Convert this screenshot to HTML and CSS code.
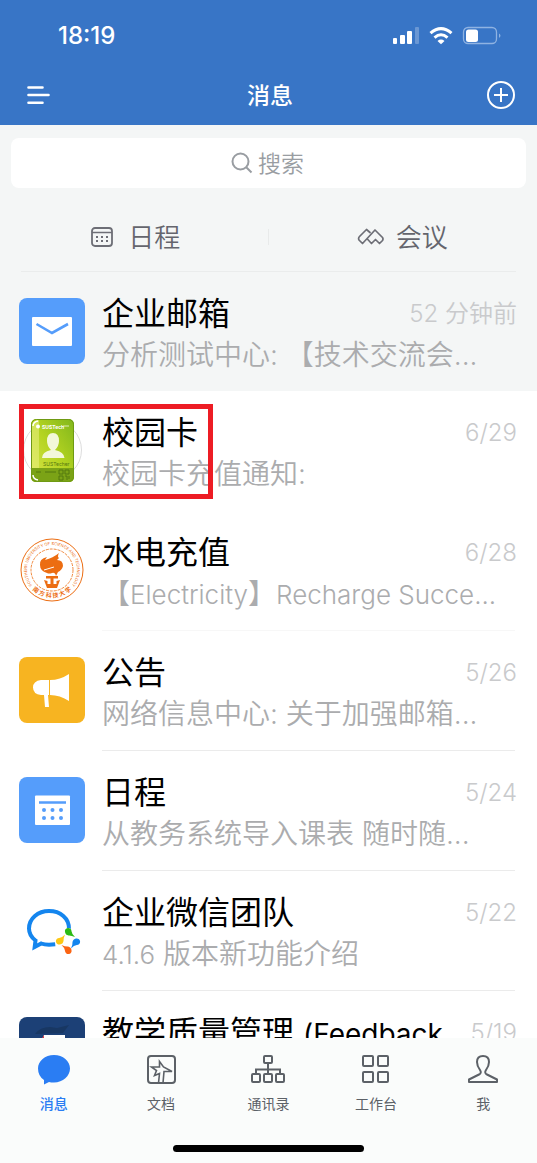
FILE: index.html
```html
<!DOCTYPE html>
<html lang="zh-CN">
<head>
<meta charset="utf-8">
<meta name="viewport" content="width=device-width, initial-scale=1">
<title>消息</title>
<link rel="stylesheet" href="styles.css">
</head>
<body>
<header class="header">
  <div class="status">
    <span class="clock">18:19</span>
    <svg class="status-icons" width="110" height="20" viewBox="0 0 110 20" aria-hidden="true">
      <g fill="#fff">
        <rect x="1" y="12" width="4" height="6" rx="1"/>
        <rect x="8" y="9" width="5" height="9" rx="1"/>
        <rect x="15" y="5" width="5" height="13" rx="1"/>
        <rect x="23" y="1" width="4" height="17" rx="1" opacity=".25"/>
        <path d="M49 18.200l-3.500-3.300q3.500-2.700 7 0z"/>
      </g>
      <g fill="none" stroke="#fff" stroke-width="3">
        <path d="M38.500 7.200q10.500-9.200 21 0"/>
        <path d="M42.500 11.600q6.500-5.600 13 0"/>
      </g>
      <rect x="71.500" y="1.500" width="33" height="16" rx="4.500" fill="none" stroke="#8fb3e2" stroke-width="1.300"/>
      <path d="M107 7.500q3 2 0 4.500z" fill="#8fb3e2"/>
      <rect x="74" y="3.500" width="12" height="12.500" rx="2.500" fill="#fff"/>
    </svg>
  </div>
  <div class="navbar">
    <button class="icon-button" aria-label="菜单">
      <svg width="24" height="20" viewBox="0 0 24 20"><path d="M2.500 2.500h14M2.500 10h20M2.500 17.700h14" stroke="#fff" stroke-width="2.600" stroke-linecap="round"/></svg>
    </button>
    <h1 class="page-title">消息</h1>
    <button class="icon-button" aria-label="添加">
      <svg width="30" height="30" viewBox="0 0 30 30" fill="none" stroke="#fff" stroke-width="2"><circle cx="15" cy="15" r="13"/><path d="M15 8v14M8 15h14"/></svg>
    </button>
  </div>
</header>

<section class="tools">
  <label class="search">
    <svg width="22" height="22" viewBox="0 0 22 22" fill="none" stroke="#999da2" stroke-width="2"><circle cx="9.500" cy="9.500" r="8"/><path d="M15 15l5.500 5.500"/></svg>
    <input class="search-input" type="text" placeholder="搜索" aria-label="搜索">
  </label>
  <div class="shortcuts">
    <button class="shortcut shortcut-calendar">
      <svg width="22" height="22" viewBox="0 0 22 22"><rect x="1" y="2" width="20" height="18" rx="3" fill="none" stroke="#6d6e76" stroke-width="1.800"/><path d="M1 6.500h20" stroke="#6d6e76" stroke-width="1.500"/><g fill="#6d6e76"><path d="M5 10h2v2H5zM10 10h2v2h-2zM15 10h2v2h-2zM5 14h2v2H5zM10 14h2v2h-2zM15 14h2v2h-2z"/></g></svg>
      <span>日程</span>
    </button>
    <button class="shortcut">
      <svg width="28" height="20" viewBox="0 0 28 20" fill="none" stroke="#6d6e76" stroke-width="1.700" stroke-linejoin="round" stroke-linecap="round"><path d="M13 5.500L9.500 2.500 2.500 9.500Q1 11 2 13L5.500 16.500 18 3 25.500 10.500Q26.500 12 25.500 13.500L22.500 16.500 18.500 12.500 14.500 16.500 10.800 12.500"/></svg>
      <span>会议</span>
    </button>
  </div>
</section>

<main class="list">
  <a class="row row-pinned" href="#mail">
    <svg class="avatar" viewBox="0 0 66 66"><rect width="66" height="66" rx="8" fill="#559dfb"/><rect x="13" y="19" width="40" height="29" rx="1" fill="#fff"/><path d="M17.500 26L33 35 49 26" fill="none" stroke="#559dfb" stroke-width="2.600"/></svg>
    <div class="body"><div class="line"><h2 class="name">企业邮箱</h2><time class="time">52 分钟前</time></div><p class="preview">分析测试中心: 【技术交流会...</p></div>
  </a>
  <a class="row row-marked" href="#card">
    <svg class="avatar" viewBox="0 0 66 66">
      <defs><linearGradient id="card" x1="0" y1="1" x2="1" y2="0"><stop offset="0" stop-color="#d9e64b"/><stop offset=".5" stop-color="#b5d421"/><stop offset="1" stop-color="#80b61c"/></linearGradient></defs>
      <circle cx="33.500" cy="33" r="29" fill="#fff" stroke="#ddd"/>
      <rect x="12" y="2" width="43" height="63" rx="5" fill="url(#card)"/>
      <path d="M12 51h43v9q0 5-5 5H17q-5 0-5-5z" fill="#7ba316"/>
      <path d="M15 4l5-1v48h-7V8z" fill="#edf28a" opacity=".5"/>
      <rect x="12.500" y="2.500" width="42" height="62" rx="5" fill="none" stroke="#6f9a13"/>
      <path d="M14 9q0-4 5-5M14 58q0 4 5 5" fill="none" stroke="#fff" stroke-width="1.500"/>
      <circle cx="19" cy="9.500" r="2" fill="#fff"/>
      <path d="M23 41q0-6 9-8-4-4-4-9 0-8 6-8t6 8q0 5-4 9 9 2 9.500 8z" fill="#f3f8d9"/>
      <text x="23" y="12" class="card-brand">SUSTech</text><path d="M44 9h6" stroke="#fff" opacity=".7"/>
      <text x="24" y="49" class="card-role">SUSTecher</text>
      <path d="M17 55h5M26 55h11" stroke="#55780f"/>
      <path d="M40 53h4v4h-4zM46 53h4v4h-4zM40 59h4v4h-4zM46 59h2v4M50 59v3" fill="none" stroke="#55780f"/>
    </svg>
    <div class="body"><div class="line"><h2 class="name">校园卡</h2><time class="time">6/29</time></div><p class="preview">校园卡充值通知:</p></div>
  </a>
  <a class="row row-faint" href="#utilities">
    <svg class="avatar" viewBox="0 0 66 66">
      <defs><path id="arc-top" d="M13 48A25 25 0 1 1 53 48"/><path id="arc-bottom" d="M6 40A28 28 0 0 0 60 40"/></defs>
      <g fill="none" stroke="#ec6d12"><circle cx="33" cy="33" r="31"/><circle cx="33" cy="33" r="21" stroke-width=".8" stroke-dasharray="3 1"/></g>
      <text class="seal-latin"><textPath href="#arc-top" startOffset="50%" text-anchor="middle">SOUTHERN UNIVERSITY OF SCIENCE AND TECHNOLOGY</textPath></text>
      <text class="seal-han"><textPath href="#arc-bottom" startOffset="50%" text-anchor="middle">南 方 科 技 大 学</textPath></text>
      <g fill="#ec6d12"><path d="M28 36q-7-2-7-8-1-6 7-8l-2 3q8-2 14-7-2 4 0 5l-2 2q6 0 6 6-1 4-5 6l-2 4q-1-4-4-3t-5 0z"/><path d="M27 39h12v2.500h-4.500V47h3v-3l3.500-1-3 8H28l-3-8 3.500 1v3h3v-5.500H27z"/></g>
      <path d="M25 33l10-3" stroke="#fff"/>
    </svg>
    <div class="body"><div class="line"><h2 class="name">水电充值</h2><time class="time">6/28</time></div><p class="preview">【<span class="latin">Electricity</span>】<span class="latin">Recharge Succe...</span></p></div>
  </a>
  <a class="row" href="#notice">
    <svg class="avatar" viewBox="0 0 66 66"><rect width="66" height="66" rx="8" fill="#f7b421"/><path d="M30 23h-8q-8 1-8 7.500T22 38h3l1 12h4l-1-12h1zM31 23q10 0 19-6v27q-9-6-19-6z" fill="#fff"/></svg>
    <div class="body"><div class="line"><h2 class="name">公告</h2><time class="time">5/26</time></div><p class="preview">网络信息中心: 关于加强邮箱...</p></div>
  </a>
  <a class="row" href="#schedule">
    <svg class="avatar" viewBox="0 0 66 66"><rect width="66" height="66" rx="8" fill="#559dfb"/><rect x="16" y="18.500" width="35" height="29.500" rx="1" fill="#fff"/><path d="M20 25.500h27" stroke="#559dfb" stroke-width="2.500"/><g fill="#559dfb"><circle cx="25" cy="33" r="2"/><circle cx="33.500" cy="33" r="2"/><circle cx="42" cy="33" r="2"/><circle cx="25" cy="41" r="2"/><circle cx="33.500" cy="41" r="2"/><circle cx="42" cy="41" r="2"/></g></svg>
    <div class="body"><div class="line"><h2 class="name">日程</h2><time class="time">5/24</time></div><p class="preview">从教务系统导入课表 随时随...</p></div>
  </a>
  <a class="row" href="#team">
    <svg class="avatar" viewBox="0 0 66 66">
      <path d="M50 32.500C50.500 21 41 14 30 14S10 21.500 10 31.500q0 7 6.500 12l-.8 6.500 6.500-3.500q5 2 14 .800" fill="none" stroke="#1485ee" stroke-width="4"/>
      <circle cx="49" cy="36" r="5" fill="#fff"/>
      <path d="M46 35a3.300 3.300 0 1 1 6.500-.8q.3 3 3.500 5.800-4-1.800-6.500-1.500-3-.5-3.500-3.500z" fill="#2bbb14"/>
      <path d="M57 41.500a3.300 3.300 0 1 1 .8 6.500q-3 .3-5.800 3.500 1.800-4 1.500-6.500.5-3 3.500-3.500z" fill="#1485ee"/>
      <path d="M52.500 53a3.300 3.300 0 1 1-6.500.8q-.3-3-3.500-5.800 4 1.800 6.500 1.500 3 .5 3.500 3.500z" fill="#fb6413"/>
      <path d="M41 47.500a3.300 3.300 0 1 1-.8-6.500q3-.3 5.800-3.500-1.800 4-1.500 6.500-.5 3-3.500 3.500z" fill="#fdc814"/>
    </svg>
    <div class="body"><div class="line"><h2 class="name">企业微信团队</h2><time class="time">5/22</time></div><p class="preview"><span class="latin">4.1.6</span> 版本新功能介绍</p></div>
  </a>
  <a class="row" href="#teaching">
    <svg class="avatar" viewBox="0 0 66 66"><rect width="66" height="66" rx="8" fill="#1c4076"/><path d="M16 17q5-7 15-7l7 1 12-3-6 8z" fill="#183763"/><path d="M22 25l3-7h21v15H20z" fill="#fff"/><path d="M21 25l4-7v7z" fill="#e3323e"/></svg>
    <div class="body"><div class="line"><h2 class="name">教学质量管理 <span class="latin-title">(Feedback</span></h2><time class="time">5/19</time></div></div>
  </a>
</main>

<footer class="footer">
  <nav class="tabs">
    <a class="tab tab-active" href="#messages"><svg width="36" height="34" viewBox="0 0 36 34"><path d="M18 3c9 0 16 6 16 13.500S27 30.500 18 30.500q-3 0-5-.5l-5 2.500V28Q2 24 2 16.500C2 9 9 3 18 3z" fill="#2a7df3"/></svg><span>消息</span></a>
    <a class="tab" href="#docs"><svg width="36" height="34" viewBox="0 0 36 34" fill="none" stroke="#5c6167" stroke-width="2"><rect x="5" y="4" width="27" height="27" rx="3"/><path d="M15.500 31l1-9.500-5 2 2-5L8.500 15h8V9.500l4 5.500 8.500 4.500H21L20 31" stroke-width="1.600"/></svg><span>文档</span></a>
    <a class="tab" href="#contacts"><svg width="36" height="34" viewBox="0 0 36 34" fill="none" stroke="#5c6167" stroke-width="2"><rect x="14" y="4" width="8" height="7" rx="1"/><path d="M6 22v-4.500h24V22M18 11v11"/><rect x="2" y="22" width="8" height="8" rx="1"/><rect x="14" y="22" width="8" height="8" rx="1"/><rect x="26" y="22" width="8" height="8" rx="1"/></svg><span>通讯录</span></a>
    <a class="tab" href="#workbench"><svg width="36" height="34" viewBox="0 0 36 34" fill="none" stroke="#5c6167" stroke-width="2"><rect x="5" y="4" width="10" height="10" rx="1"/><rect x="20" y="4" width="10" height="10" rx="1"/><rect x="5" y="20" width="10" height="10" rx="1"/><rect x="20" y="20" width="10" height="10" rx="1"/></svg><span>工作台</span></a>
    <a class="tab" href="#me"><svg width="36" height="34" viewBox="0 0 36 34" fill="none" stroke="#5c6167" stroke-width="2" stroke-linejoin="round"><path d="M4 30v-2.500l10-5q3-1.500 1-4.500-3-4-3-8 0-6 6-6t6 6q0 4-3 8-2 3 1 4.500l10 5V30z"/></svg><span>我</span></a>
  </nav>
  <div class="home-bar"></div>
</footer>
</body>
</html>
```
FILE: styles.css
```css
* { box-sizing: border-box; }
body {
  margin: 0;
  height: 100vh;
  display: flex;
  flex-direction: column;
  background: #fff;
  color: #000;
  font-family: Inter, "Noto Sans CJK SC", sans-serif;
}
h1, h2, p { margin: 0; font-weight: 400; }
a { color: inherit; text-decoration: none; }
button { border: 0; padding: 0; background: none; font: inherit; color: inherit; }
svg { display: block; flex: none; }

.header { flex: none; background: #3875c6; color: #fff; }
.status {
  display: flex;
  align-items: center;
  justify-content: space-between;
  height: 64px;
  padding: 8px 35px 0 58px;
}
.clock { font-size: 24px; font-weight: 500; line-height: 28px; }
.navbar {
  display: flex;
  align-items: center;
  justify-content: space-between;
  height: 61px;
  padding: 0 21px 0 26px;
}
.icon-button { display: flex; }
.page-title { padding: 2px 0 0 4px; font-size: 23px; font-weight: 500; line-height: 32px; }

.tools { flex: none; padding: 13px 11px 0; background: #f4f6f6; }
.search {
  display: flex;
  align-items: center;
  justify-content: center;
  gap: 5px;
  height: 50px;
  border-radius: 8px;
  background: #fff;
}
.search-input {
  width: 48px;
  padding: 2px 0 0;
  border: 0;
  outline: 0;
  background: none;
  font: 350 23px/32px Inter, "Noto Sans CJK SC", sans-serif;
}
.search-input::placeholder { color: #999da2; opacity: 1; }
.shortcuts {
  display: grid;
  grid-template-columns: 1fr 1fr;
  height: 84px;
  margin: 0 10px;
  padding: 14px 0 0;
  border-bottom: 1px solid #eaecec;
}
.shortcut {
  display: flex;
  align-items: center;
  justify-content: center;
  gap: 11px;
  height: 69px;
  color: #64656d;
  font-size: 26px;
  font-weight: 350;
  line-height: 36px;
}
.shortcut span { padding-top: 2px; }
.shortcut-calendar {
  gap: 15px;
  padding-right: 18px;
  background: linear-gradient(#e8eaea, #e8eaea) right center / 1px 16px no-repeat;
}
.shortcut + .shortcut { padding-left: 20px; }

.list { flex: 1; min-height: 0; overflow: hidden; }
.row {
  position: relative;
  display: flex;
  gap: 17px;
  height: 120px;
  padding-left: 19px;
}
.row-pinned { height: 119px; background: #f4f6f6; }
.row-pinned .body, .row-marked .body { border-color: transparent; }
.row-faint .body { border-color: #f7f7f7; }
.row-marked::after {
  content: "";
  box-sizing: border-box;
  position: absolute;
  inset: 13px auto auto 19px;
  width: 194px;
  height: 95px;
  border: 5px solid #ed1c24;
}
.avatar { width: 66px; height: 66px; margin-top: 26px; }
.body {
  flex: 1;
  min-width: 0;
  margin-right: 22px;
  padding-top: 19px;
  border-bottom: 1px solid #ebebeb;
}
.line { display: flex; align-items: center; justify-content: space-between; height: 46px; margin-right: -2px; }
.name { font-size: 32px; line-height: 46px; white-space: nowrap; }
.time { color: #c9cacc; font-size: 24px; font-weight: 350; line-height: 34px; white-space: nowrap; }
.preview { color: #abacae; font-size: 28px; font-weight: 350; line-height: 36px; white-space: nowrap; }
.latin { font-size: 26px; }
.latin-title { font-size: 28px; }

.card-brand { fill: #fff; font-size: 5px; font-weight: 700; }
.card-role { fill: #55780f; font-size: 5px; }
.seal-latin { fill: #ec6d12; font-size: 4px; }
.seal-han { fill: #ec6d12; font-size: 6px; font-weight: 700; }

.footer { flex: none; height: 125px; background: #fafcfb; }
.tabs { display: grid; grid-template-columns: repeat(5, 1fr); height: 110px; padding-top: 14px; }
.tab {
  display: flex;
  flex-direction: column;
  align-items: center;
  gap: 8px;
  color: #5c6167;
  font-size: 14px;
  line-height: 20px;
}
.tab-active { color: #2a7df3; font-weight: 500; }
.home-bar { width: 191px; height: 7px; margin: -3px auto 0; border-radius: 4px; background: #000; }
```
